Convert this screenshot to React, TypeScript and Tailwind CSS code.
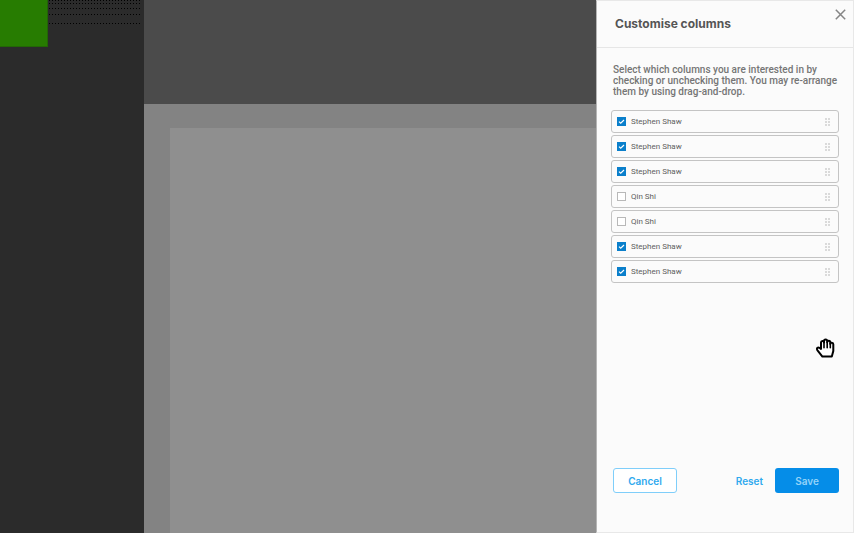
import { useState } from "react";

const COLUMNS = [
  { id: 1, name: "Stephen Shaw", visible: true },
  { id: 2, name: "Stephen Shaw", visible: true },
  { id: 3, name: "Stephen Shaw", visible: true },
  { id: 4, name: "Qin Shi", visible: false },
  { id: 5, name: "Qin Shi", visible: false },
  { id: 6, name: "Stephen Shaw", visible: true },
  { id: 7, name: "Stephen Shaw", visible: true },
];

type Column = (typeof COLUMNS)[number];

const DottedLine = ({ spacing = "" }: { spacing?: string }) => (
  <div
    className={`h-px bg-[repeating-linear-gradient(90deg,#000_0px,#000_1px,transparent_1px,transparent_3px)] ${spacing}`}
  />
);

const DragHandle = () => (
  <svg width="6" height="10" viewBox="0 0 6 10" fill="#dadada" aria-hidden="true">
    {[1, 4, 7].map((y) => (
      <g key={y}>
        <rect x="0" y={y} width="2" height="2" />
        <rect x="3" y={y} width="2" height="2" />
      </g>
    ))}
  </svg>
);

const HandCursor = () => (
  <svg
    className="pointer-events-none absolute right-[18px] top-[337px]"
    width="19"
    height="20"
    viewBox="0 0 19 20"
    fill="#fff"
    stroke="#000"
    strokeWidth="2"
    strokeLinecap="round"
    strokeLinejoin="round"
    aria-hidden="true"
  >
    <path d="M5 11V4.6C5 2.5 8 2.5 8 4.4V3C8 1 11.2 1 11.2 3V4.2C11.2 2.2 14.3 2.2 14.3 4.2V6C14.3 4.2 17.3 4.2 17.3 6.2V13L15.8 18.6H6.4L1.5 12.4C.2 10.4 1.8 8.9 3.4 9.8Z" />
    <path d="M8 4.4V9.8M11.2 4V9.8M14.3 5V9.8" strokeWidth="1.6" />
  </svg>
);

const ColumnRow = ({ column, onToggle }: { column: Column; onToggle: () => void }) => (
  <li className="flex h-[23px] items-center rounded-[3px] border border-[#c4c4c4] pl-[5px] pr-[7px]">
    <label className="flex flex-1 items-center gap-[5px] font-['Roboto',sans-serif] text-[8px] leading-3 text-[#606060]">
      <span className="grid">
        <input
          type="checkbox"
          checked={column.visible}
          onChange={onToggle}
          className="col-start-1 row-start-1 size-[9px] appearance-none border border-[#b8b8b8] bg-white checked:border-[#0a7fcb] checked:bg-[#0a7fcb]"
        />
        {column.visible && (
          <svg
            className="pointer-events-none col-start-1 row-start-1"
            width="9"
            height="9"
            viewBox="0 0 9 9"
            fill="none"
            stroke="#fff"
            strokeWidth="1.2"
            aria-hidden="true"
          >
            <path d="M2 4.6 3.7 6.1 7 3" />
          </svg>
        )}
      </span>
      {column.name}
    </label>
    <DragHandle />
  </li>
);

const App = () => {
  const [columns, setColumns] = useState(COLUMNS);

  const toggle = (id: number) =>
    setColumns(columns.map((c) => (c.id === id ? { ...c, visible: !c.visible } : c)));

  return (
    <div className="flex h-screen overflow-hidden bg-[#2b2b2b] font-['Inter',sans-serif]">
      <nav className="flex w-36 shrink-0 items-start">
        <div className="h-[47px] w-12 border-b border-r border-[#236606] bg-[#277c01]" />
        <div className="flex flex-1 flex-col pl-px pr-1">
          <DottedLine />
          <DottedLine spacing="mt-0.5" />
          <DottedLine spacing="mt-1" />
          <DottedLine spacing="mt-[5px]" />
          <DottedLine spacing="mt-2" />
        </div>
      </nav>

      <main className="flex min-w-0 flex-1 flex-col bg-[#838383]">
        <div className="h-[104px] shrink-0 bg-[#4b4b4b]" />
        <div className="ml-[26px] mt-6 flex-1 bg-[#8f8f8f]" />
      </main>

      <aside className="relative flex w-[258px] shrink-0 flex-col border border-[#e8e8e8] border-l-[#b5b5b5] bg-[#fbfbfb]">
        <header className="flex h-[47px] shrink-0 items-start justify-between border-b border-[#e6e6e6] pl-[18px] pr-[7px]">
          <h1 className="self-center text-xs font-bold text-[#555]">Customise columns</h1>
          <button type="button" aria-label="Close" className="mt-2 text-[#858585]">
            <svg width="11" height="11" viewBox="0 0 11 11" stroke="currentColor" strokeWidth="1.5">
              <path d="M.8.8 10.2 10.2M10.2.8.8 10.2" />
            </svg>
          </button>
        </header>

        <div className="flex-1 px-3.5 pt-4">
          <p className="-mr-2 pl-0.5 font-['Roboto',sans-serif] text-[10px] font-medium leading-[11px] text-[#757575]">
            Select which columns you are interested in by
            <br />
            checking or unchecking them. You may re-arrange
            <br />
            them by using drag-and-drop.
          </p>
          <ul className="mt-[13px] flex flex-col gap-0.5">
            {columns.map((column) => (
              <ColumnRow key={column.id} column={column} onToggle={() => toggle(column.id)} />
            ))}
          </ul>
        </div>

        <footer className="flex items-center pb-[39px] pl-4 pr-3.5 text-[10px] font-semibold">
          <button
            type="button"
            className="h-[25px] w-16 rounded-[3px] border border-[#7fcefa] bg-white pt-px text-[#2fa9ee]"
          >
            Cancel
          </button>
          <button type="button" className="ml-auto mr-3 pt-px text-[#2fa9ee]">
            Reset
          </button>
          <button type="button" className="h-[25px] w-16 rounded-[3px] bg-[#058de8] pt-px text-[#93d3f9]">
            Save
          </button>
        </footer>

        <HandCursor />
      </aside>
    </div>
  );
};

export default App;
